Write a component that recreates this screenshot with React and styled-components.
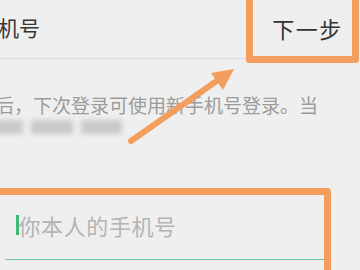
import React from 'react'
import styled, { createGlobalStyle } from 'styled-components'

const GlobalStyle = createGlobalStyle`
  html, body {
    margin: 0;
    padding: 0;
    background: #efefef;
  }
  body {
    font-family: "Noto Sans CJK SC", "Noto Sans", sans-serif;
  }
`

const ORANGE = '#f49e5d'

const Screen = styled.div`
  position: relative;
  width: 360px;
  height: 270px;
  overflow: hidden;
  background: #efefef;
`

const Header = styled.header`
  display: flex;
  justify-content: space-between;
  align-items: flex-start;
  height: 58px;
  border-bottom: 1px solid #dadada;
`

const Title = styled.h1`
  margin: 14px 0 0 -2px;
  font-size: 21px;
  line-height: 26px;
  font-weight: 400;
  color: #363636;
  white-space: nowrap;
`

const NextButton = styled.button`
  display: flex;
  align-items: center;
  justify-content: center;
  box-sizing: border-box;
  width: 113px;
  height: 70px;
  margin: -7px 1px 0 0;
  padding: 0 0 0 10px;
  border: 7px solid ${ORANGE};
  border-radius: 3px;
  background: #efefef;
  font-family: inherit;
  font-size: 22px;
  line-height: 26px;
  color: #333;
  letter-spacing: 1.5px;
  position: relative;
  z-index: 1;
`

const Notice = styled.div`
  margin: 35px 0 0 -5px;
`

const NoticeLine = styled.p`
  margin: 0;
  height: 22px;
  font-size: 19px;
  line-height: 22px;
  color: #9b9b9b;
  white-space: nowrap;
  display: flex;
  align-items: center;
  gap: 8px;
`

const Smudge = styled.span`
  display: inline-block;
  width: ${p => p.$w}px;
  height: 14px;
  background: #c9c9c9;
  filter: blur(2.5px);
`

const Annotated = styled.div`
  box-sizing: border-box;
  margin: 50px 0 0 -10px;
  width: 341px;
  height: 120px;
  border: 7px solid ${ORANGE};
  border-radius: 4px;
`

const Field = styled.div`
  display: flex;
  align-items: center;
  box-sizing: border-box;
  height: 65px;
  margin-left: 8px;
  padding: 0 0 4px 11px;
  border-bottom: 1px solid #6fc79c;
`

const Caret = styled.span`
  width: 2.5px;
  height: 20px;
  background: #3fb877;
`

const Placeholder = styled.span`
  font-size: 22px;
  line-height: 26px;
  color: #b4b4b4;
  letter-spacing: 0.6px;
`

const ArrowLayer = styled.svg`
  position: absolute;
  left: 0;
  top: 0;
  pointer-events: none;
  z-index: 2;
`

const Arrow = () => (
  <ArrowLayer width="360" height="270" viewBox="0 0 360 270">
    <line x1="131" y1="141" x2="218" y2="80" stroke={ORANGE} strokeWidth="6" strokeLinecap="round" />
    <polygon points="234,69 211,73 223,90" fill={ORANGE} />
  </ArrowLayer>
)

export default function App() {
  return (
    <Screen>
      <GlobalStyle />
      <Header>
        <Title>机号</Title>
        <NextButton>下一步</NextButton>
      </Header>
      <Notice>
        <NoticeLine>后，下次登录可使用新手机号登录。当</NoticeLine>
        <NoticeLine>
          <Smudge $w={28} />
          <Smudge $w={42} />
          <Smudge $w={41} />
        </NoticeLine>
      </Notice>
      <Annotated>
        <Field>
          <Caret />
          <Placeholder>你本人的手机号</Placeholder>
        </Field>
      </Annotated>
      <Arrow />
    </Screen>
  )
}
